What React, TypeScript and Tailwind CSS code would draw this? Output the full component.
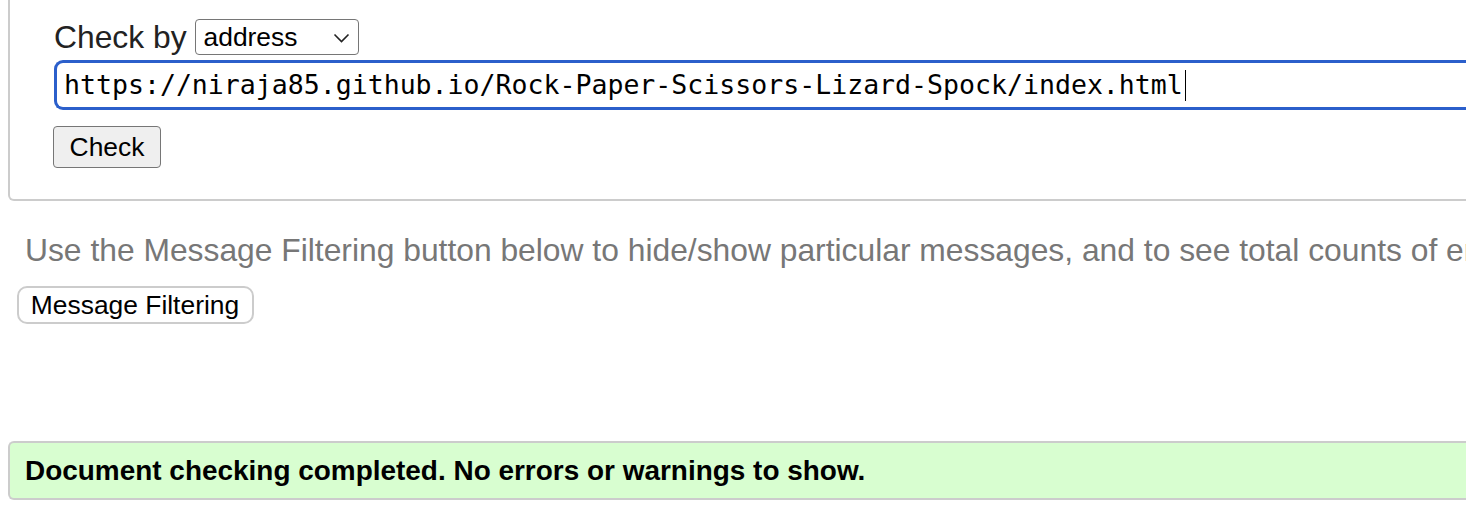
import React from "react";

const url = "https://niraja85.github.io/Rock-Paper-Scissors-Lizard-Spock/index.html";

const App = () => {
  return (
    <div className="w-[1466px] h-[520px] overflow-hidden bg-white font-['Liberation_Sans',Arial,sans-serif]">
      <div className="w-[1700px] pl-[8px]">
        {/* Check form */}
        <div className="h-[201px] border-2 border-t-0 border-[#cccccc] rounded-b-[6px] pl-[44px] pt-[19px]">
          <div className="flex items-center h-[36px]">
            <span className="text-[31.8px] leading-[36px] text-[#222222] mr-[8px]">Check by</span>
            <div className="relative w-[164px] h-[36px] border-[1.5px] border-[#767676] rounded-[4px] bg-white flex items-center pl-[8px]">
              <span className="text-[26.4px] leading-[30px] text-black">address</span>
              <svg
                className="absolute right-[8px] top-[13px]"
                width="17"
                height="10"
                viewBox="0 0 17 10"
                fill="none"
              >
                <polyline points="1.5,1.5 8.5,8.5 15.5,1.5" stroke="#222" strokeWidth="1.6" />
              </svg>
            </div>
          </div>

          <div className="mt-[5px] h-[50px] border-[3.5px] border-r-0 border-[#2b5fcb] rounded-l-[9px] flex items-center pl-[7px]">
            <span className="font-['DejaVu_Sans_Mono',Menlo,monospace] text-[26.55px] leading-[32px] text-black whitespace-nowrap">
              {url}
            </span>
            <span className="ml-[2px] w-[1.5px] h-[31px] bg-black" />
          </div>

          <button className="mt-[16px] -ml-[1px] w-[108px] h-[42px] border-[1.5px] border-[#767676] rounded-[4px] bg-[#efefef] text-[26.4px] leading-[30px] text-black">
            Check
          </button>
        </div>

        {/* Filtering hint */}
        <p className="mt-[31px] pl-[17px] text-[31.8px] leading-[36px] text-[#777777] whitespace-nowrap">
          Use the Message Filtering button below to hide/show particular messages, and to see total counts of errors and warnings.
        </p>
        <button className="mt-[18px] ml-[8.5px] w-[237px] h-[38px] border-2 border-[#cccccc] rounded-[10px] bg-white text-[26.4px] leading-[30px] text-black">
          Message Filtering
        </button>

        {/* Result */}
        <div className="mt-[117px] h-[59px] border-2 border-r-0 border-[#cccccc] rounded-l-[6px] bg-[#d8fed0] flex items-center pl-[15px]">
          <span className="text-[27.95px] leading-[32px] font-bold text-black whitespace-nowrap">
            Document checking completed. No errors or warnings to show.
          </span>
        </div>
      </div>
    </div>
  );
};

export default App;
